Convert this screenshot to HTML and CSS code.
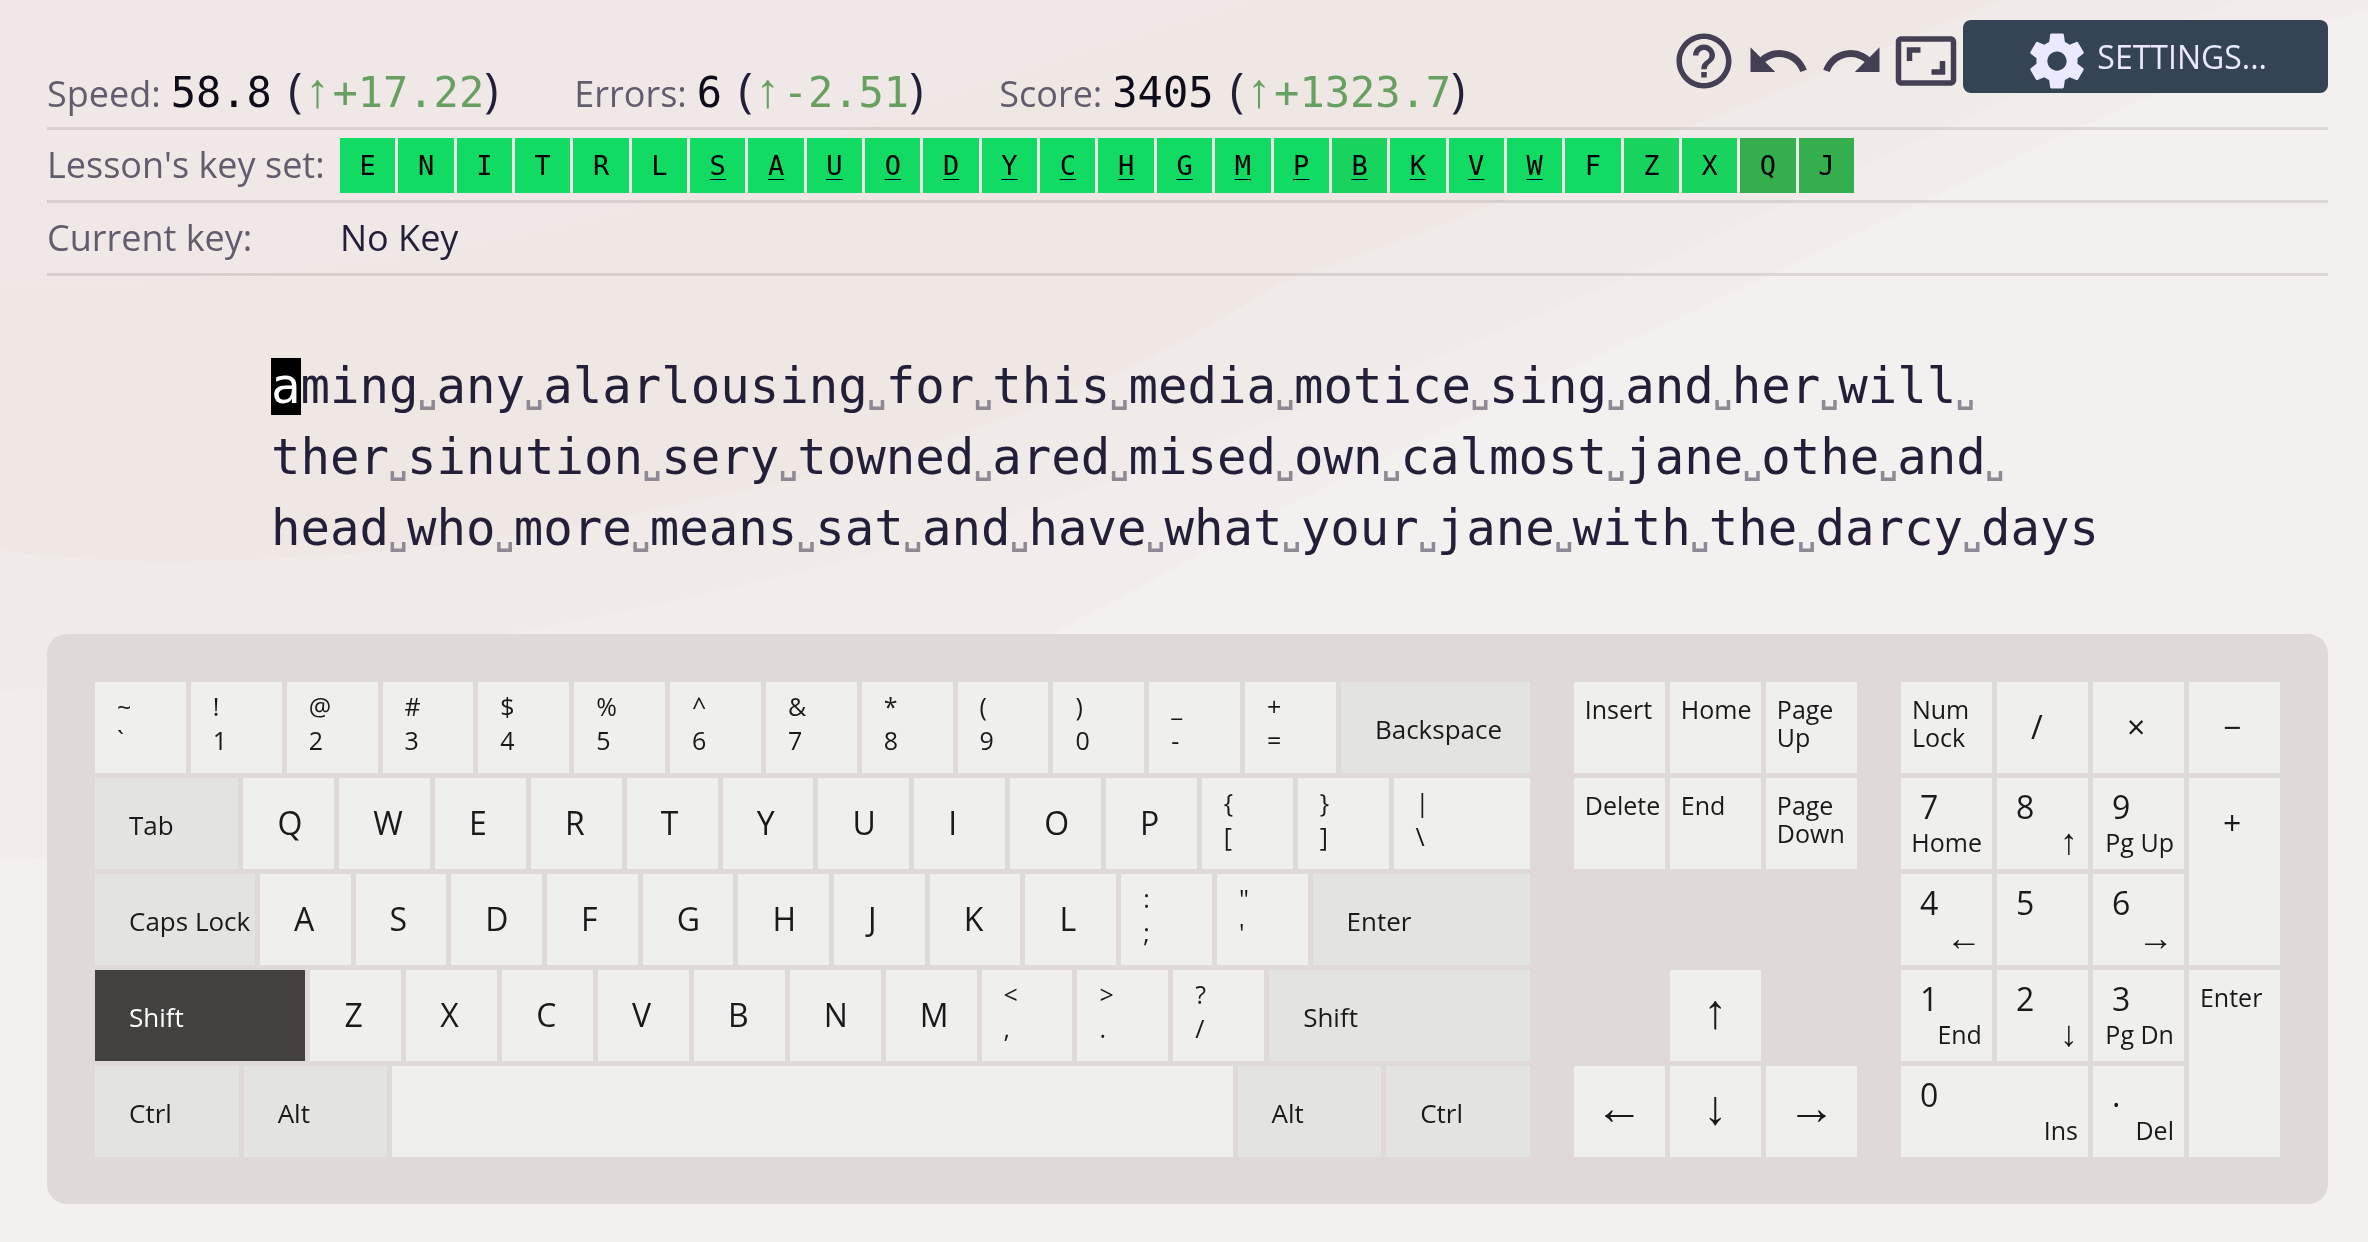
FILE: index.html
```html
<!DOCTYPE html>
<html lang="en">
<head>
<meta charset="utf-8">
<title>Typing practice</title>
<link rel="stylesheet" href="styles.css">
</head>
<body>
<svg class="backdrop" viewBox="0 0 2368 1242" preserveAspectRatio="none" aria-hidden="true">
  <path fill="#f2edec" d="M0 0H2368V8C2200 70 2050 140 1913 207 1800 262 1500 400 1286 507 1180 565 1080 620 1000 660 600 760 300 850 0 860Z"/>
  <path fill="#f0ebe9" d="M0 0H2240C2080 60 1900 150 1740 225 1500 340 1250 430 1000 520 640 620 300 680 0 690Z"/>
  <path fill="#efe7e4" d="M0 0H2001C1900 40 1800 85 1698 123 1550 180 1400 245 1280 283 1100 400 900 460 745 490 560 535 400 555 240 560 150 563 60 560 0 550Z"/>
  <path fill="#f0e8e6" d="M0 0H1260C1050 60 900 110 760 170 500 260 250 285 0 285Z"/>
</svg>
<main class="page">
  <header class="top">
    <dl class="stats">
      <div class="stat"><dt>Speed:</dt><dd><span class="num">58.8</span> (<span class="delta"><span class="arrow">↑</span><span class="num">+17.22</span></span>)</dd></div>
      <div class="stat"><dt>Errors:</dt><dd><span class="num">6</span> (<span class="delta"><span class="arrow">↑</span><span class="num">-2.51</span></span>)</dd></div>
      <div class="stat"><dt>Score:</dt><dd><span class="num">3405</span> (<span class="delta"><span class="arrow">↑</span><span class="num">+1323.7</span></span>)</dd></div>
    </dl>
    <nav class="tools">
      <button class="tool" type="button" aria-label="Help"><svg class="icon" viewBox="0 0 24 24"><path d="M11 18h2v-2h-2v2zm1-16C6.480 2 2 6.480 2 12s4.480 10 10 10 10-4.480 10-10S17.520 2 12 2zm0 18c-4.410 0-8-3.590-8-8s3.590-8 8-8 8 3.590 8 8-3.590 8-8 8zm0-14c-2.210 0-4 1.790-4 4h2c0-1.100.9-2 2-2s2 .9 2 2c0 2-3 1.750-3 5h2c0-2.250 3-2.500 3-5 0-2.210-1.790-4-4-4z"/></svg></button>
      <button class="tool" type="button" aria-label="Previous lesson"><svg class="icon" viewBox="0 0 24 24"><path d="M12.500 8c-2.650 0-5.050.99-6.900 2.600L2 7v9h9l-3.620-3.620c1.390-1.160 3.160-1.880 5.120-1.880 3.540 0 6.550 2.310 7.600 5.500l2.370-.78C21.080 11.030 17.150 8 12.500 8z"/></svg></button>
      <button class="tool" type="button" aria-label="Next lesson"><svg class="icon" viewBox="0 0 24 24"><path d="M18.400 10.600C16.550 8.990 14.150 8 11.500 8c-4.650 0-8.580 3.030-9.960 7.220L3.900 16c1.050-3.190 4.050-5.500 7.600-5.500 1.950 0 3.730.72 5.120 1.880L13 16h9V7l-3.600 3.600z"/></svg></button>
      <button class="tool" type="button" aria-label="Change layout"><svg class="icon" viewBox="0 0 24 24"><path d="M19 12h-2v3h-3v2h5v-5zM7 9h3V7H5v5h2V9zm14-6H3c-1.100 0-2 .9-2 2v14c0 1.100.9 2 2 2h18c1.100 0 2-.9 2-2V5c0-1.100-.9-2-2-2zm0 16.010H3V4.990h18v14.020z"/></svg></button>
      <button class="settings" type="button"><svg class="icon" viewBox="0 0 24 24"><path d="M19.430 12.980c.04-.32.07-.64.07-.98s-.03-.66-.07-.98l2.110-1.650c.19-.15.24-.42.12-.64l-2-3.460c-.12-.22-.39-.3-.61-.22l-2.490 1c-.52-.4-1.080-.73-1.690-.98l-.38-2.650C14.460 2.180 14.250 2 14 2h-4c-.25 0-.46.18-.49.42l-.38 2.650c-.61.25-1.170.59-1.690.98l-2.490-1c-.23-.09-.49 0-.61.22l-2 3.460c-.13.22-.07.49.12.64l2.110 1.650c-.04.32-.07.65-.07.98s.03.66.07.98l-2.110 1.650c-.19.15-.24.42-.12.64l2 3.460c.12.22.39.3.61.22l2.490-1c.52.4 1.080.73 1.690.98l.38 2.650c.03.24.24.42.49.42h4c.25 0 .46-.18.49-.42l.38-2.650c.61-.25 1.170-.59 1.690-.98l2.490 1c.23.09.49 0 .61-.22l2-3.460c.12-.22.07-.49-.12-.64l-2.110-1.650zM12 15.500c-1.930 0-3.500-1.570-3.500-3.500s1.570-3.500 3.500-3.500 3.500 1.570 3.500 3.500-1.570 3.500-3.500 3.500z"/></svg>SETTINGS...</button>
    </nav>
  </header>

  <section class="line">
    <span class="line-name">Lesson's key set:</span>
    <ul class="keyset">
      <li>E</li><li>N</li><li>I</li><li>T</li><li>R</li><li>L</li><li class="u">S</li><li class="u">A</li><li class="u">U</li><li class="u">O</li><li class="u">D</li><li class="u">Y</li><li class="u">C</li><li class="u">H</li><li class="u">G</li><li class="u">M</li><li class="u">P</li><li class="u mid">B</li><li class="u">K</li><li class="u">V</li><li class="u">W</li><li>F</li><li class="mid">Z</li><li class="mid">X</li><li class="low">Q</li><li class="low">J</li>
    </ul>
  </section>
  <section class="line">
    <span class="line-name">Current key:</span>
    <span>No Key</span>
  </section>

  <section class="text">
    <p><span class="cursor">a</span>ming<i>␣</i>any<i>␣</i>alarlousing<i>␣</i>for<i>␣</i>this<i>␣</i>media<i>␣</i>motice<i>␣</i>sing<i>␣</i>and<i>␣</i>her<i>␣</i>will<i>␣</i></p>
    <p>ther<i>␣</i>sinution<i>␣</i>sery<i>␣</i>towned<i>␣</i>ared<i>␣</i>mised<i>␣</i>own<i>␣</i>calmost<i>␣</i>jane<i>␣</i>othe<i>␣</i>and<i>␣</i></p>
    <p>head<i>␣</i>who<i>␣</i>more<i>␣</i>means<i>␣</i>sat<i>␣</i>and<i>␣</i>have<i>␣</i>what<i>␣</i>your<i>␣</i>jane<i>␣</i>with<i>␣</i>the<i>␣</i>darcy<i>␣</i>days</p>
  </section>

  <section class="keyboard">
    <div class="block main">
      <div class="row number-row">
        <div class="key pair"><span>~</span><span>`</span></div>
        <div class="key pair"><span>!</span><span>1</span></div>
        <div class="key pair"><span>@</span><span>2</span></div>
        <div class="key pair"><span>#</span><span>3</span></div>
        <div class="key pair"><span>$</span><span>4</span></div>
        <div class="key pair"><span>%</span><span>5</span></div>
        <div class="key pair"><span>^</span><span>6</span></div>
        <div class="key pair"><span>&amp;</span><span>7</span></div>
        <div class="key pair"><span>*</span><span>8</span></div>
        <div class="key pair"><span>(</span><span>9</span></div>
        <div class="key pair"><span>)</span><span>0</span></div>
        <div class="key pair"><span>_</span><span>-</span></div>
        <div class="key pair"><span>+</span><span>=</span></div>
        <div class="key mod">Backspace</div>
      </div>
      <div class="row tab-row">
        <div class="key mod">Tab</div>
        <div class="key">Q</div><div class="key">W</div><div class="key">E</div><div class="key">R</div><div class="key">T</div><div class="key">Y</div><div class="key">U</div><div class="key">I</div><div class="key">O</div><div class="key">P</div>
        <div class="key pair"><span>{</span><span>[</span></div>
        <div class="key pair"><span>}</span><span>]</span></div>
        <div class="key pair"><span>|</span><span>\</span></div>
      </div>
      <div class="row caps-row">
        <div class="key mod">Caps Lock</div>
        <div class="key">A</div><div class="key">S</div><div class="key">D</div><div class="key">F</div><div class="key">G</div><div class="key">H</div><div class="key">J</div><div class="key">K</div><div class="key">L</div>
        <div class="key pair"><span>:</span><span>;</span></div>
        <div class="key pair"><span>"</span><span>'</span></div>
        <div class="key mod">Enter</div>
      </div>
      <div class="row shift-row">
        <div class="key mod pressed">Shift</div>
        <div class="key">Z</div><div class="key">X</div><div class="key">C</div><div class="key">V</div><div class="key">B</div><div class="key">N</div><div class="key">M</div>
        <div class="key pair"><span>&lt;</span><span>,</span></div>
        <div class="key pair"><span>&gt;</span><span>.</span></div>
        <div class="key pair"><span>?</span><span>/</span></div>
        <div class="key mod">Shift</div>
      </div>
      <div class="row space-row">
        <div class="key mod">Ctrl</div>
        <div class="key mod">Alt</div>
        <div class="key"></div>
        <div class="key mod">Alt</div>
        <div class="key mod">Ctrl</div>
      </div>
    </div>
    <div class="block nav">
      <div class="key name">Insert</div><div class="key name">Home</div><div class="key name">Page<br>Up</div>
      <div class="key name">Delete</div><div class="key name">End</div><div class="key name">Page<br>Down</div>
      <div class="key arrow-key up">↑</div>
      <div class="key arrow-key left">←</div><div class="key arrow-key down">↓</div><div class="key arrow-key right">→</div>
    </div>
    <div class="block pad">
      <div class="key name">Num<br>Lock</div><div class="key">/</div><div class="key">×</div><div class="key">−</div>
      <div class="key dual"><span>7</span><small>Home</small></div><div class="key dual"><span>8</span><small class="arrow">↑</small></div><div class="key dual"><span>9</span><small>Pg Up</small></div><div class="key tall">+</div>
      <div class="key dual"><span>4</span><small class="arrow">←</small></div><div class="key dual"><span>5</span></div><div class="key dual"><span>6</span><small class="arrow">→</small></div>
      <div class="key dual"><span>1</span><small>End</small></div><div class="key dual"><span>2</span><small class="arrow">↓</small></div><div class="key dual"><span>3</span><small>Pg Dn</small></div><div class="key name tall">Enter</div>
      <div class="key dual wide"><span>0</span><small>Ins</small></div><div class="key dual"><span>.</span><small>Del</small></div>
    </div>
  </section>
</main>
</body>
</html>
```
FILE: styles.css
```css
:root {
  --ui: "Open Sans", "Noto Sans", sans-serif;
  --mono: "DejaVu Sans Mono", "Liberation Mono", monospace;
  --arrows: "Liberation Sans", sans-serif;
  --ink: #231f38;
  --muted: #625d6c;
  --rule: rgba(30, 20, 20, 0.11);
}

* {
  box-sizing: border-box;
}

body {
  margin: 0;
  min-height: 100vh;
  color: var(--ink);
  font: 36px/40px var(--ui);
  background: #f4f0ef;
}

.backdrop {
  position: fixed;
  inset: 0;
  z-index: -1;
  width: 100%;
  height: 100%;
}

.page {
  padding: 20px 40px 38px 47px;
}

.top,
.line {
  border-bottom: 3px solid var(--rule);
}

.top {
  display: flex;
  justify-content: space-between;
  height: 110px;
}

.stats {
  display: flex;
  gap: 76px;
  align-items: flex-end;
  margin: 0;
  padding-bottom: 12px;
}

.stat {
  display: flex;
  gap: 10px;
  align-items: baseline;
  white-space: nowrap;
}

dt,
.line-name {
  color: var(--muted);
}

dd {
  margin: 0;
  font-size: 48px;
  font-weight: 500;
  line-height: 52px;
}

.num {
  font-family: var(--mono);
  font-size: 42px;
  line-height: 1;
}

dd > .num {
  margin-right: 4px;
  color: #0e0c18;
}

.delta {
  color: #67a061;
}

.arrow,
.arrow-key {
  font-family: var(--arrows);
  font-weight: 400;
}

.delta .arrow {
  display: inline-block;
  width: 30px;
  font-size: 48px;
  line-height: 1;
  text-align: center;
}

.tools {
  display: flex;
  align-items: flex-start;
}

button {
  border: 0;
  background: none;
  font: inherit;
  cursor: pointer;
}

.tool {
  display: flex;
  align-items: center;
  height: 82px;
  padding: 0 4px;
  color: #453f54;
}

.icon {
  width: 66px;
  height: 66px;
  fill: currentColor;
}

.settings {
  display: flex;
  gap: 7px;
  align-items: center;
  height: 73px;
  padding: 0 61px;
  border-radius: 8px;
  color: #ebe9fd;
  background: #344454;
  font-size: 32px;
}

.settings .icon {
  margin-top: 8px;
}

.line {
  display: flex;
  align-items: center;
  height: 73px;
}

.line-name {
  width: 293px;
}

.keyset {
  display: grid;
  grid-template-columns: repeat(26, 1fr);
  gap: 3px;
  flex: 1;
  max-width: 1514px;
  margin: 0;
  padding: 0;
  list-style: none;
  color: #000;
  font: 27px/55px var(--mono);
  text-align: center;
}

.keyset li {
  background: #12db63;
}

.keyset .mid {
  background: #18d35e;
}

.keyset .low {
  background: #35ae4e;
}

.u {
  text-decoration: underline 1px;
  text-underline-offset: 4px;
}

.text {
  padding: 75px 224px 70px;
  font: 49px/71px var(--mono);
  white-space: nowrap;
}

.text p {
  margin: 0;
}

.text i {
  color: #8f8994;
  font-size: 30px;
  font-style: normal;
  font-weight: 700;
  line-height: 1;
}

.cursor {
  color: #fff;
  background: #000;
}

.keyboard {
  display: grid;
  grid-template-columns: 598fr 118fr 158fr;
  gap: 44px;
  padding: 48px 48px 47px;
  border-radius: 20px;
  color: #1a1a1a;
  background: #dfd9d9;
}

.block {
  display: grid;
  grid-auto-rows: 91px;
  gap: 5px;
}

.nav {
  grid-template-columns: repeat(3, 1fr);
}

.pad {
  grid-template-columns: repeat(4, 1fr);
}

/* Column widths are the key widths in keyboard units; a plain key is 38. */
.row {
  display: grid;
  gap: 5px;
}

.number-row { grid-template-columns: repeat(13, 38fr) 79fr; }
.tab-row { grid-template-columns: 60fr repeat(12, 38fr) 57fr; }
.caps-row { grid-template-columns: 67fr repeat(11, 38fr) 91fr; }
.shift-row { grid-template-columns: 88fr repeat(10, 38fr) 109fr; }
.space-row { grid-template-columns: 60fr 60fr 351fr 60fr 60fr; }

.key {
  min-width: 0;
  padding-left: 34px;
  background: #efefed;
  font-size: 32px;
  line-height: 90px;
  white-space: nowrap;
}

.mod {
  padding-top: 3px;
  background: #e3e3e1;
  font-size: 26px;
  line-height: 88px;
}

.pair {
  display: flex;
  flex-direction: column;
  padding: 7px 0 0 22px;
  font-size: 25px;
  line-height: 34px;
}

.pressed {
  color: #fff;
  background: #42413f;
}

.name {
  padding: 13px 0 0 11px;
  font-size: 25px;
  line-height: 28px;
}

.arrow-key {
  padding: 0;
  font-size: 48px;
  line-height: 84px;
  text-align: center;
}

.up { grid-area: 4 / 2; }
.left { grid-area: 5 / 1; }
.down { grid-area: 5 / 2; }
.right { grid-area: 5 / 3; }

.dual {
  display: flex;
  flex-direction: column;
  padding: 8px 10px 0 19px;
  line-height: 42px;
}

.dual small {
  align-self: flex-end;
  font-size: 25px;
  line-height: 28px;
}

.dual .arrow {
  font-size: 36px;
}

.tall {
  grid-row: span 2;
}

.wide {
  grid-column: span 2;
}
```
